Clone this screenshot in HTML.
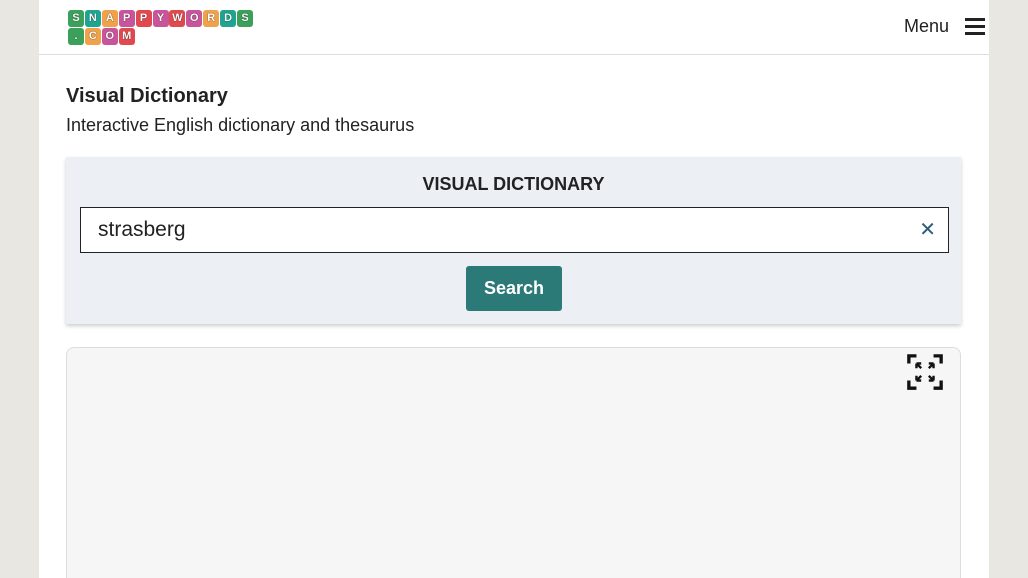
<!DOCTYPE html><html><head><style>
html,body{margin:0;width:1028px;height:578px;overflow:hidden}
body{background:#e9e7e2;font-family:"Liberation Sans",sans-serif;position:relative}
.col{position:absolute;left:39px;top:0;width:950px;height:578px;background:#fff;overflow:hidden}
.hdr{position:absolute;left:0;top:0;width:950px;height:54px;border-bottom:1px solid #ddd}
.t{position:absolute;width:16px;height:17px;border-radius:3px;color:#fff;font-size:11px;font-weight:bold;text-align:center;line-height:17px;text-shadow:0 0 1px #000}
.g{background:#3aa05a}.tl{background:#1fa491}.o{background:#f0a24a}.p{background:#c8559a}.r{background:#e04a4e}
</style></head><body>
<div class="col">
<div class="hdr">
<div id="logo"></div>
<div style="position:absolute;left:865px;top:16px;font-size:18px;color:#222">Menu</div>
<div style="position:absolute;left:926px;top:18px;width:20px">
<div style="height:3px;background:#222;margin-bottom:4px"></div><div style="height:3px;background:#222;margin-bottom:4px"></div><div style="height:3px;background:#222"></div></div>
</div>
<div style="position:absolute;left:27px;top:85px;font-size:20px;font-weight:bold;color:#222">Visual Dictionary</div>
<div style="position:absolute;left:27px;top:115px;font-size:18px;color:#222">Interactive English dictionary and thesaurus</div>
<div style="position:absolute;left:27px;top:157px;width:895px;height:167px;background:#ecf0f5;box-shadow:0 2px 4px rgba(0,0,0,.2)">
<div style="text-align:center;margin-top:17px;font-size:18px;font-weight:bold;color:#222">VISUAL DICTIONARY</div>
<div style="position:absolute;left:14px;top:50px;width:867px;height:44px;border:1px solid #222;background:#fff">
<div style="position:absolute;left:17px;top:10px;font-size:21px;color:#222">strasberg</div>
<div style="position:absolute;right:12px;top:9px;font-size:20px;color:#2a5d7a">✕</div></div>
<div style="position:absolute;left:400px;top:109px;width:96px;height:45px;background:#2b7a78;border-radius:3px;color:#fff;font-weight:bold;font-size:18px;text-align:center;line-height:44px">Search</div>
</div>
<div style="position:absolute;left:27px;top:347px;width:893px;height:230px;background:#f6f6f6;border:1px solid #ddd;border-bottom:none;border-radius:8px 8px 0 0">
<svg style="position:absolute;left:839px;top:5px" width="38" height="38" viewBox="0 0 40 40" fill="none" stroke="#111" stroke-width="3.5">
<path d="M3 11V3h8M29 3h8v8M37 29v8h-8M11 37H3v-8"/>
<path d="M11 11l5 5M11 11h5M11 11v5M29 11l-5 5M29 11h-5M29 11v5M11 29l5-5M11 29h5M11 29v-5M29 29l-5-5M29 29h-5M29 29v-5" stroke-width="2.5"/></svg>
</div>
</div>
<script>
var r1=[["S","g"],["N","tl"],["A","o"],["P","p"],["P","r"],["Y","p"],["W","r"],["O","p"],["R","o"],["D","tl"],["S","g"]],r2=[[".","g"],["C","o"],["O","p"],["M","r"]],h="";
r1.forEach(function(a,i){h+='<div class="t '+a[1]+'" style="left:'+(29+i*16.9)+'px;top:10px">'+a[0]+'</div>'});
r2.forEach(function(a,i){h+='<div class="t '+a[1]+'" style="left:'+(29+i*16.9)+'px;top:28px">'+a[0]+'</div>'});
document.getElementById("logo").innerHTML=h;
</script>
</body></html>
